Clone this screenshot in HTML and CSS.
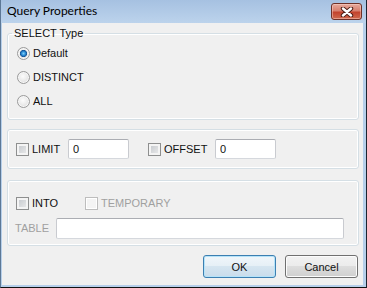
FILE: index.html
```html
<!DOCTYPE html>
<html lang="en">
<head>
    <meta charset="UTF-8">
    <title>Query Properties</title>
    <link rel="stylesheet" href="styles.css">
</head>
<body>
    <div class="window">
        <div class="titlebar">
            <span class="title">Query Properties</span>
            <button class="close" type="button" aria-label="Close">
                <svg width="14" height="10" viewBox="0 0 14 10">
                    <path d="M3 1.5 L11 8.5 M11 1.5 L3 8.5" stroke="#4a1c14" stroke-width="4.4" stroke-linecap="round"/>
                    <path d="M3 1.5 L11 8.5 M11 1.5 L3 8.5" stroke="#fff" stroke-width="2.4" stroke-linecap="round"/>
                </svg>
            </button>
        </div>
        <form class="client" action="#">
            <fieldset class="group select-type">
                <legend>SELECT Type</legend>
                <label class="option"><input type="radio" name="select_type" checked>Default</label>
                <label class="option"><input type="radio" name="select_type">DISTINCT</label>
                <label class="option"><input type="radio" name="select_type">ALL</label>
            </fieldset>

            <div class="group limits">
                <label class="check w-limit"><input type="checkbox">LIMIT</label>
                <input class="text w-num" type="text" value="0">
                <label class="check w-offset"><input type="checkbox">OFFSET</label>
                <input class="text w-num" type="text" value="0">
            </div>

            <div class="group into">
                <div class="row">
                    <label class="check w-into"><input type="checkbox">INTO</label>
                    <label class="check disabled"><input type="checkbox" disabled>TEMPORARY</label>
                </div>
                <div class="row table-row">
                    <span class="field-label disabled">TABLE</span>
                    <input class="text table-name" type="text">
                </div>
            </div>

            <div class="buttons">
                <button type="submit" class="btn btn-default">OK</button>
                <button type="button" class="btn">Cancel</button>
            </div>
        </form>
    </div>
</body>
</html>
```

FILE: styles.css
```css
/* ---------- window frame ---------- */

body {
    margin: 0;
    background: #fff;
}

.window {
    width: 367px;
    height: 288px;
    box-sizing: border-box;
    border-left: 1px solid #5d7896;
    border-right: 1px solid #1c2430;
    border-bottom: 1px solid #111;
    background: #b6cfea;
    display: flex;
    flex-direction: column;
}

.titlebar {
    height: 23px;
    display: flex;
    align-items: flex-start;
    background: linear-gradient(#a6c1e1, #bcd3ec);
    flex-shrink: 0;
}

.title {
    padding-left: 6px;
    font: 12px/22px Lato, "Liberation Sans", sans-serif;
    color: #000;
}

.close {
    margin: 3px 4px 0 auto;
    width: 31px;
    height: 17px;
    padding: 0;
    border: 1px solid #6e3128;
    border-radius: 3px;
    background: linear-gradient(#e6a99c 0%, #d7806f 45%, #c2432d 55%, #cf6a4f 100%);
    box-shadow: inset 0 0 0 1px rgba(255, 220, 210, .45);
    display: flex;
    align-items: center;
    justify-content: center;
}

.close svg {
    display: block;
}

/* ---------- client area ---------- */

.client {
    margin: 0 3px 2px 1px;
    flex: 1;
    background: #f0f0f0;
    padding: 4px 4px 0 5px;
    font: 11px/13px "Liberation Sans", Arial, sans-serif;
    color: #111;
}

.group {
    margin: 0;
    border: 1px solid #d5dfe5;
    border-radius: 3px;
    box-shadow: 0 0 0 1px #fff inset;
    min-width: 0;
}

.select-type {
    padding: 1px 0 6px 9px;
}

.select-type legend {
    margin-left: -5px;
    padding: 0 2px;
    line-height: 13px;
}

.option {
    display: flex;
    align-items: center;
    height: 24px;
}

.limits {
    margin-top: 9px;
    padding: 9px 0 9px 8px;
    display: flex;
    align-items: center;
}

.into {
    margin-top: 11px;
    padding: 12px 0 6px 8px;
}

.row {
    display: flex;
    align-items: center;
    height: 20px;
}

.table-row {
    margin-top: 5px;
    height: 21px;
}

.check {
    display: flex;
    align-items: center;
}

.w-limit { width: 52px; }
.w-offset { width: 67px; margin-left: 19px; }
.w-into { width: 69px; }

.disabled {
    color: #a0a0a0;
}

.field-label {
    width: 41px;
    margin-left: -1px;
}

/* ---------- controls ---------- */

input[type=radio],
input[type=checkbox] {
    -webkit-appearance: none;
    appearance: none;
    margin: 0 3px 0 0;
    width: 13px;
    height: 13px;
    flex-shrink: 0;
}

input[type=radio] {
    border-radius: 50%;
    border: 1px solid #9a9a9a;
    background: radial-gradient(circle at 45% 40%, #fcfcfc 0, #ececec 45%, #cfcfcf 100%);
    box-shadow: inset 0 0 0 1px #f7f7f7;
}

input[type=radio]:checked {
    background:
        radial-gradient(circle at 50% 50%, #7fd0f7 0, #2a8ad5 2px, #16508f 3.4px, transparent 3.8px),
        radial-gradient(circle at 45% 40%, #fcfcfc 0, #ececec 45%, #cfcfcf 100%);
}

input[type=checkbox] {
    border: 1px solid #8e8f8f;
    background: linear-gradient(135deg, #c1c5ca, #eeeeee);
    box-shadow: inset 0 0 0 2px #f4f4f4;
}

input[type=checkbox]:disabled {
    border-color: #bdbdbd;
    background: #f4f4f4;
    box-shadow: inset 0 0 0 1px #fff;
}

.text {
    box-sizing: border-box;
    height: 20px;
    margin: 0;
    padding: 0 4px;
    border: 1px solid #abadb3;
    border-color: #abadb3 #c9cbd0 #d5d8dd #c9cbd0;
    border-radius: 2px;
    background: #fff;
    font: 11px "Liberation Sans", Arial, sans-serif;
    color: #111;
    outline: none;
}

.w-num { width: 61px; }

.table-name {
    width: 288px;
    height: 21px;
}

/* ---------- dialog buttons ---------- */

.buttons {
    margin-top: 9px;
    display: flex;
    justify-content: flex-end;
    gap: 9px;
    padding-right: 1px;
}

.btn {
    width: 73px;
    height: 23px;
    padding: 0;
    border: 1px solid #707070;
    border-radius: 3px;
    background: linear-gradient(#f2f2f2 0%, #ebebeb 50%, #dddddd 50%, #cfcfcf 100%);
    box-shadow: inset 0 0 0 1px #fcfcfc;
    font: 11px "Liberation Sans", Arial, sans-serif;
    color: #111;
}

.btn-default {
    border-color: #3c7fb1;
    background: linear-gradient(#f0f6fa 0%, #e5eff6 50%, #d5e5f0 50%, #c9dceb 100%);
    box-shadow: inset 0 0 0 1px #b5e3f9;
}
```
